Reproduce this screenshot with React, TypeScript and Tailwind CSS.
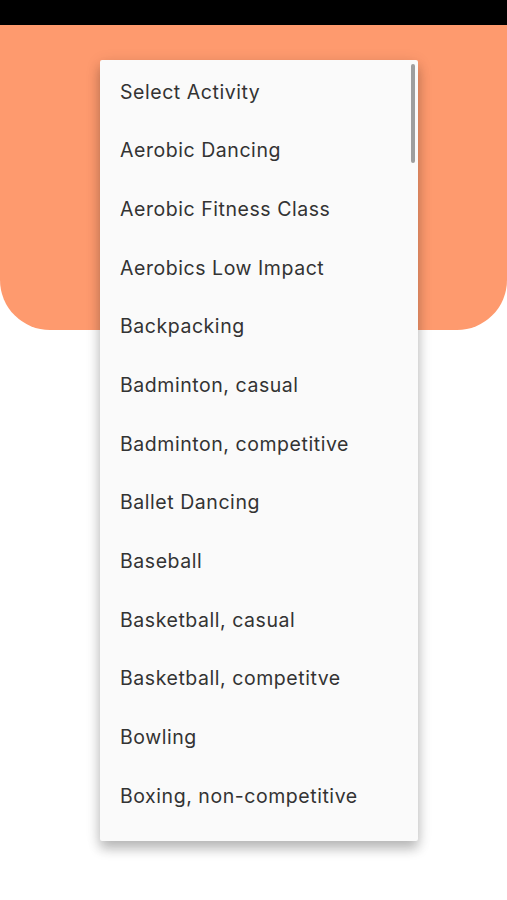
import React from 'react';

const activities = [
  'Select Activity',
  'Aerobic Dancing',
  'Aerobic Fitness Class',
  'Aerobics Low Impact',
  'Backpacking',
  'Badminton, casual',
  'Badminton, competitive',
  'Ballet Dancing',
  'Baseball',
  'Basketball, casual',
  'Basketball, competitve',
  'Bowling',
  'Boxing, non-competitive',
];

const App: React.FC = () => {
  return (
    <div className="relative w-[507px] h-[900px] bg-white overflow-hidden font-['Inter',sans-serif]">
      {/* status bar */}
      <div className="h-[25px] bg-black"></div>
      {/* orange header */}
      <div className="h-[305px] bg-[#fe9a6e] rounded-b-[50px]"></div>

      {/* open dropdown menu */}
      <div className="absolute left-[100px] top-[60px] w-[318px] h-[781px] bg-[#fafafa] rounded-[2px] shadow-[0_8px_12px_rgba(0,0,0,0.22),0_3px_16px_rgba(0,0,0,0.12)] overflow-hidden">
        <div className="flex flex-col pt-[3px]">
          {activities.map((a) => (
            <div key={a} className="h-[58.67px] flex items-center pl-[20px] text-[19.5px] text-[#333333] tracking-[0.55px]">
              {a}
            </div>
          ))}
        </div>
        <div className="absolute right-[3px] top-[4px] w-[4px] h-[99px] rounded-full bg-[#9e9e9e]"></div>
      </div>
    </div>
  );
};

export default App;
